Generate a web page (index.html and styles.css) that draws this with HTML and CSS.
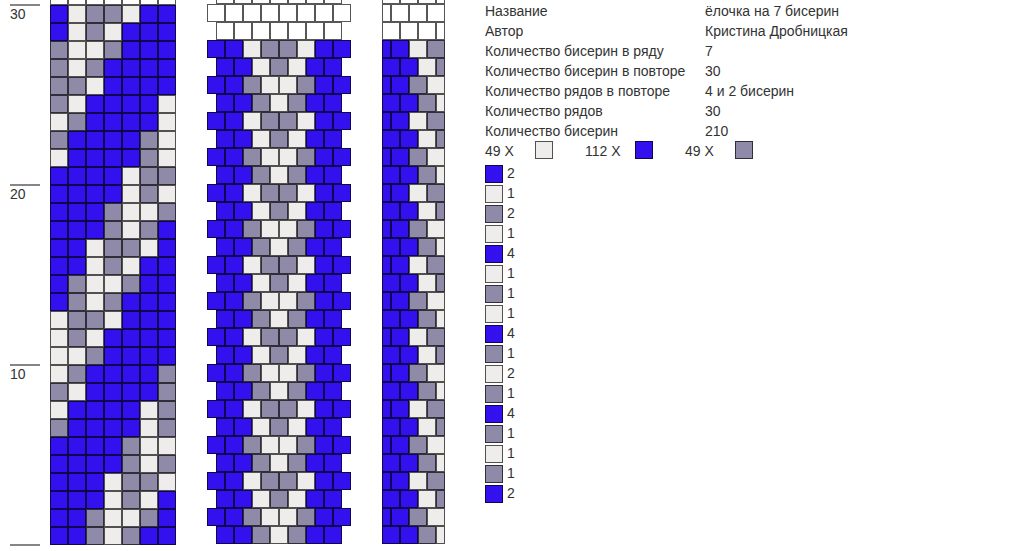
FILE: index.html
```html
<!DOCTYPE html>
<html lang="ru">
<head>
<meta charset="utf-8">
<title>ёлочка на 7 бисерин</title>
<link rel="stylesheet" href="styles.css">
</head>
<body>
<div class="page">
  <div class="ruler">
    <div class="seg"><span>30</span></div>
    <div class="seg"><span>20</span></div>
    <div class="seg"><span>10</span></div>
    <div class="seg-end"></div>
  </div>
  <div class="pattern straight" id="straight"></div>
  <div class="pattern brick" id="brick"></div>
  <div class="pattern window" id="window"></div>
  <div class="info">
    <div class="props">
      <div class="prop"><span class="k">Название</span><span class="v">ёлочка на 7 бисерин</span></div>
      <div class="prop"><span class="k">Автор</span><span class="v">Кристина Дробницкая</span></div>
      <div class="prop"><span class="k">Количество бисерин в ряду</span><span class="v">7</span></div>
      <div class="prop"><span class="k">Количество бисерин в повторе</span><span class="v">30</span></div>
      <div class="prop"><span class="k">Количество рядов в повторе</span><span class="v">4 и 2 бисерин</span></div>
      <div class="prop"><span class="k">Количество рядов</span><span class="v">30</span></div>
      <div class="prop"><span class="k">Количество бисерин</span><span class="v">210</span></div>
    </div>
    <div class="totals">
      <div class="total"><span class="cnt">49 X</span><i class="sw w"></i></div>
      <div class="total"><span class="cnt">112 X</span><i class="sw b"></i></div>
      <div class="total"><span class="cnt">49 X</span><i class="sw g"></i></div>
    </div>
    <div class="legend">
      <div class="lg"><i class="sw b"></i><span>2</span></div>
      <div class="lg"><i class="sw w"></i><span>1</span></div>
      <div class="lg"><i class="sw g"></i><span>2</span></div>
      <div class="lg"><i class="sw w"></i><span>1</span></div>
      <div class="lg"><i class="sw b"></i><span>4</span></div>
      <div class="lg"><i class="sw w"></i><span>1</span></div>
      <div class="lg"><i class="sw g"></i><span>1</span></div>
      <div class="lg"><i class="sw w"></i><span>1</span></div>
      <div class="lg"><i class="sw b"></i><span>4</span></div>
      <div class="lg"><i class="sw g"></i><span>1</span></div>
      <div class="lg"><i class="sw w"></i><span>2</span></div>
      <div class="lg"><i class="sw g"></i><span>1</span></div>
      <div class="lg"><i class="sw b"></i><span>4</span></div>
      <div class="lg"><i class="sw g"></i><span>1</span></div>
      <div class="lg"><i class="sw w"></i><span>1</span></div>
      <div class="lg"><i class="sw g"></i><span>1</span></div>
      <div class="lg"><i class="sw b"></i><span>2</span></div>
    </div>
  </div>
</div>
<script src="script.js"></script>
</body>
</html>
```

FILE: styles.css
```css
body {
  margin: 0;
  background: #fff;
  color: #333;
  font: 14px "Liberation Sans", Arial, sans-serif;
}
.page {
  display: flex;
  align-items: flex-start;
}
.ruler {
  width: 50px;
  padding-top: 4px;
  flex-shrink: 0;
}
.seg {
  box-sizing: border-box;
  height: 180px;
  width: 30px;
  margin-left: 10px;
  border-top: 2px solid #868686;
  padding-top: 1px;
  line-height: 15px;
}
.seg-end {
  width: 30px;
  margin-left: 10px;
  border-top: 2px solid #868686;
}
.pattern {
  display: flex;
  flex-direction: column;
  justify-content: flex-end;
  overflow: hidden;
  flex-shrink: 0;
}
.straight {
  width: 126px;
  height: 545px;
}
.brick {
  width: 144px;
  height: 544px;
  margin-left: 31px;
}
.window {
  width: 63px;
  height: 544px;
  margin-left: 31px;
}
.row {
  display: flex;
  flex-shrink: 0;
  height: 18px;
}
.row.short {
  padding-left: 9px;
}
.c {
  display: block;
  box-sizing: border-box;
  width: 18px;
  height: 18px;
  flex-shrink: 0;
  border: 1px solid rgba(0, 0, 0, 0.66);
}
.c.half {
  width: 9px;
}
.b { background: #3311ee; }
.w { background: #efedeb; }
.g { background: #8e8aa8; }
.e { background: #ffffff; }
.info {
  margin-left: 40px;
  padding-top: 1px;
  line-height: 20px;
  flex-shrink: 0;
}
.prop {
  display: flex;
  height: 20px;
}
.k {
  width: 220px;
}
.totals {
  display: flex;
  height: 22px;
}
.total {
  display: flex;
  align-items: flex-start;
  margin-right: 32px;
}
.cnt {
  width: 50px;
}
.sw {
  display: block;
  box-sizing: border-box;
  width: 18px;
  height: 18px;
  border: 1px solid rgba(0, 0, 0, 0.66);
}
.lg {
  display: flex;
  height: 20px;
}
.lg .sw {
  margin-top: 2px;
  margin-right: 4px;
}
```

FILE: script.js
```js
(function () {
  var straight = [
    "eeeeeee",
    "bwggwbb", "bwgwbbb", "gwwgbbb", "gwgbbbb", "ggwbbbb",
    "gwbbbbw", "wgbbbbw", "gbbbbgw", "wbbbbgw", "bbbbwgg",
    "bbbbwgw", "bbbgwwg", "bbbgwgb", "bbwggwb", "bbwgwbb",
    "bgwwgbb", "bgwgbbb", "wggwbbb", "wgwbbbb", "wwgbbbb",
    "wgbbbbg", "gwbbbbg", "wbbbbwg", "gbbbbwg", "bbbbgww",
    "bbbbgwg", "bbbwggw", "bbbwgwb", "bbgwwgb", "bbgwgbb"
  ];
  var cycle = ["bbwggwbb", "bbwgwbb", "bbgwwgbb", "bbgwgbb"];
  var brick = ["eeeeeee", "eeeeeeee", "eeeeeee"];
  for (var i = 0; i < 28; i++) brick.push(cycle[i % 4]);

  function addRow(container, str, extra, halfIndex) {
    var r = document.createElement("div");
    r.className = "row" + (extra ? " " + extra : "");
    for (var j = 0; j < str.length; j++) {
      var c = document.createElement("i");
      c.className = "c " + str.charAt(j) + (j === halfIndex ? " half" : "");
      r.appendChild(c);
    }
    container.appendChild(r);
  }

  var s = document.getElementById("straight");
  straight.forEach(function (row) { addRow(s, row, "", -1); });

  var b = document.getElementById("brick");
  brick.forEach(function (row) { addRow(b, row, row.length === 7 ? "short" : "", -1); });

  var w = document.getElementById("window");
  brick.forEach(function (row) {
    var part = row.slice(0, 4);
    addRow(w, part, "", row.length === 8 ? 0 : 3);
  });
})();
```
